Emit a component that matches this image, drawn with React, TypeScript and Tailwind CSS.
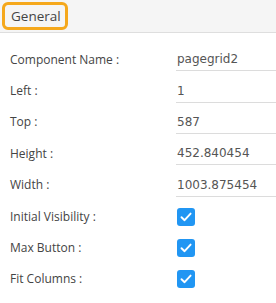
import React from "react";

function Check() {
  return (
    <div className="w-[18px] h-[18px] rounded-[3px] bg-[#2196f3] flex items-center justify-center">
      <svg width="14" height="14" viewBox="0 0 14 14" fill="none">
        <path d="M2.5 7.2 L5.6 10.2 L11.6 3.6" stroke="white" strokeWidth="1.9" strokeLinecap="round" strokeLinejoin="round" />
      </svg>
    </div>
  );
}

const inputs: [string, string][] = [
  ["Component Name :", "pagegrid2"],
  ["Left :", "1"],
  ["Top :", "587"],
  ["Height :", "452.840454"],
  ["Width :", "1003.875454"],
];
const checks = ["Initial Visibility :", "Max Button :", "Fit Columns :"];

export default function App() {
  return (
    <div className="w-[276px] h-[303px] bg-white overflow-hidden" style={{ fontFamily: '"Open Sans", sans-serif' }}>
      <div className="h-[33px] bg-[#f5f5f5] border-b border-[#dedede] pl-[2px] pt-[2px]">
        <div className="w-[66px] h-[28px] border-[3px] border-[#f5a81c] rounded-[6px] flex items-center pl-[6px] text-[13.5px] text-[#444]">
          General
        </div>
      </div>
      <div className="pt-[11px]">
        {inputs.map(([l, v]) => (
          <div key={l} className="h-[31.4px] flex items-center">
            <div className="w-[176px] pl-[10px] text-[12px] text-[#444]">{l}</div>
            <div
              className="flex-1 h-[23px] border-b border-[#dcdcdc] flex items-center pl-[1px] text-[12px] text-[#555]"
              style={{ fontFamily: '"DejaVu Sans", sans-serif' }}
            >
              {v}
            </div>
          </div>
        ))}
        {checks.map((l) => (
          <div key={l} className="h-[31.4px] flex items-center">
            <div className="w-[177px] pl-[10px] text-[12px] text-[#444]">{l}</div>
            <Check />
          </div>
        ))}
      </div>
    </div>
  );
}
